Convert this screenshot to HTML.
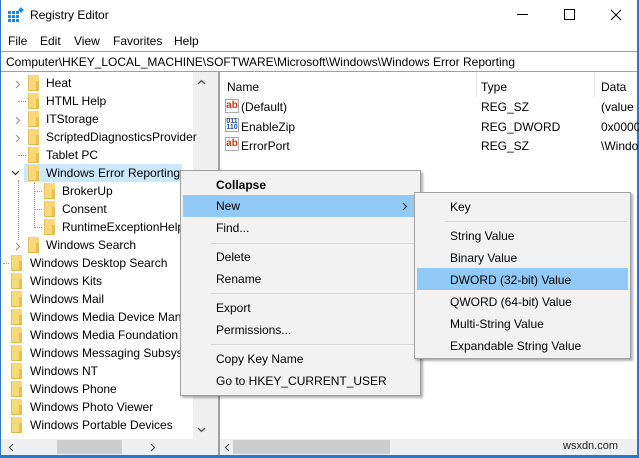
<!DOCTYPE html>
<html><head><style>
*{margin:0;padding:0;box-sizing:border-box}
body{width:639px;height:458px;overflow:hidden;background:#fff;font-family:"Liberation Sans",sans-serif;font-size:12px;color:#000;position:relative}
.a{position:absolute;white-space:nowrap}
.f{position:absolute;width:11px;height:16px;background:#f8d878;border-left:1px solid #e8c25a;border-bottom:1px solid #e0b84a}
.f:after{content:"";position:absolute;right:0;bottom:0;width:3px;height:9px;background:#e9bf4d}
.t{position:absolute;font-size:12px}
.mi{position:absolute;left:35px;font-size:12px}
.sep{position:absolute;left:30px;right:3px;height:1px;background:#d7d7d7}
.dv{position:absolute;width:1px;border-left:1px dotted #999}
.dh{position:absolute;height:1px;border-top:1px dotted #999}
.ch{position:absolute}
</style></head><body>
<div class="a" style="left:0;top:0;width:1px;height:458px;background:#2b78c8"></div>
<div class="a" style="right:0;top:0;width:2px;height:458px;background:#2b78c8"></div>
<div class="a" style="left:0;bottom:0;width:639px;height:3px;background:#2b78c8"></div>
<svg class="a" style="left:8px;top:7px" width="16" height="16"><g fill="#1e88e5"><rect x="0" y="4" width="3" height="3"/><rect x="4" y="4" width="3" height="3"/><rect x="8" y="4" width="3" height="3"/><rect x="0" y="8" width="3" height="3"/><rect x="4" y="8" width="3" height="3"/><rect x="8" y="8" width="3" height="3"/><rect x="0" y="12" width="3" height="3"/><rect x="4" y="12" width="3" height="3"/><rect x="8" y="12" width="3" height="3"/><rect x="11" y="1" width="4" height="4" transform="rotate(45 13 3)"/></g></svg>
<div class="a" style="left:30px;top:8px;font-size:12px">Registry Editor</div>
<div class="a" style="left:517px;top:14px;width:11px;height:1px;background:#000"></div>
<div class="a" style="left:564px;top:9px;width:11px;height:11px;border:1px solid #000"></div>
<svg class="a" style="left:610px;top:9px" width="12" height="12"><path d="M1 1L11 11M11 1L1 11" stroke="#000" stroke-width="1"/></svg>
<div class="a" style="left:8px;top:34px">File</div>
<div class="a" style="left:40px;top:34px">Edit</div>
<div class="a" style="left:74px;top:34px">View</div>
<div class="a" style="left:113px;top:34px">Favorites</div>
<div class="a" style="left:174px;top:34px">Help</div>
<div class="a" style="left:1px;top:51px;width:636px;height:21px;border-top:1px solid #a0a0a0;border-bottom:1px solid #a0a0a0;background:#fff"></div>
<div class="a" style="left:6px;top:55px">Computer\HKEY_LOCAL_MACHINE\SOFTWARE\Microsoft\Windows\Windows Error Reporting</div>
<div class="a" style="left:210px;top:72px;width:9px;height:383px;background:#f0f0f0;border-right:1px solid #a0a0a0"></div>
<div class="a" style="left:193px;top:72px;width:17px;height:367px;background:#f0f0f0"></div>
<svg class="a" style="left:197px;top:79px" width="9" height="6"><path d="M1 5L4.5 1.5L8 5" fill="none" stroke="#555" stroke-width="1.3"/></svg>
<svg class="a" style="left:197px;top:427px" width="9" height="6"><path d="M1 1L4.5 4.5L8 1" fill="none" stroke="#555" stroke-width="1.3"/></svg>
<!-- dotted tree lines -->
<div class="dh" style="left:18px;top:101px;width:8px"></div>
<div class="dh" style="left:18px;top:155px;width:8px"></div>
<div class="dv" style="left:18px;top:180px;height:60px"></div>
<div class="dv" style="left:34px;top:182px;height:46px"></div>
<div class="dh" style="left:34px;top:191px;width:8px"></div>
<div class="dh" style="left:34px;top:209px;width:8px"></div>
<div class="dh" style="left:34px;top:227px;width:8px"></div>
<div class="dh" style="left:3px;top:263px;width:6px"></div>
<svg class="ch" style="left:15px;top:80px" width="6" height="9"><path d="M1 1L4.5 4.5L1 8" fill="none" stroke="#999" stroke-width="1.2"/></svg>
<div class="f" style="left:28px;top:75px"></div><div class="t" style="left:46px;top:76px">Heat</div>
<div class="f" style="left:28px;top:93px"></div><div class="t" style="left:46px;top:94px">HTML Help</div>
<svg class="ch" style="left:15px;top:116px" width="6" height="9"><path d="M1 1L4.5 4.5L1 8" fill="none" stroke="#999" stroke-width="1.2"/></svg>
<div class="f" style="left:28px;top:111px"></div><div class="t" style="left:46px;top:112px">ITStorage</div>
<svg class="ch" style="left:15px;top:134px" width="6" height="9"><path d="M1 1L4.5 4.5L1 8" fill="none" stroke="#999" stroke-width="1.2"/></svg>
<div class="f" style="left:28px;top:129px"></div><div class="t" style="left:46px;top:130px">ScriptedDiagnosticsProvider</div>
<div class="f" style="left:28px;top:147px"></div><div class="t" style="left:46px;top:148px">Tablet PC</div>
<div class="a" style="left:24px;top:164px;width:158px;height:18px;background:#cce8ff"></div>
<svg class="ch" style="left:11px;top:170px" width="9" height="6"><path d="M1 1L4.5 4.5L8 1" fill="none" stroke="#333" stroke-width="1.2"/></svg>
<div class="f" style="left:28px;top:165px"></div><div class="t" style="left:46px;top:166px">Windows Error Reporting</div>
<div class="f" style="left:44px;top:183px"></div><div class="t" style="left:62px;top:184px">BrokerUp</div>
<div class="f" style="left:44px;top:201px"></div><div class="t" style="left:62px;top:202px">Consent</div>
<div class="f" style="left:44px;top:219px"></div><div class="t" style="left:62px;top:220px">RuntimeExceptionHelp</div>
<svg class="ch" style="left:15px;top:242px" width="6" height="9"><path d="M1 1L4.5 4.5L1 8" fill="none" stroke="#999" stroke-width="1.2"/></svg>
<div class="f" style="left:28px;top:237px"></div><div class="t" style="left:46px;top:238px">Windows Search</div>
<div class="f" style="left:11px;top:255px"></div><div class="t" style="left:30px;top:256px">Windows Desktop Search</div>
<div class="f" style="left:11px;top:273px"></div><div class="t" style="left:30px;top:274px">Windows Kits</div>
<div class="f" style="left:11px;top:291px"></div><div class="t" style="left:30px;top:292px">Windows Mail</div>
<div class="f" style="left:11px;top:309px"></div><div class="t" style="left:30px;top:310px">Windows Media Device Man</div>
<div class="f" style="left:11px;top:327px"></div><div class="t" style="left:30px;top:328px">Windows Media Foundation</div>
<div class="f" style="left:11px;top:345px"></div><div class="t" style="left:30px;top:346px">Windows Messaging Subsyst</div>
<div class="f" style="left:11px;top:363px"></div><div class="t" style="left:30px;top:364px">Windows NT</div>
<div class="f" style="left:11px;top:381px"></div><div class="t" style="left:30px;top:382px">Windows Phone</div>
<div class="f" style="left:11px;top:399px"></div><div class="t" style="left:30px;top:400px">Windows Photo Viewer</div>
<div class="f" style="left:11px;top:417px"></div><div class="t" style="left:30px;top:418px">Windows Portable Devices</div>
<div class="a" style="left:1px;top:439px;width:209px;height:16px;background:#f0f0f0"></div>
<div class="a" style="left:57px;top:440px;width:65px;height:14px;background:#cdcdcd"></div>
<svg class="a" style="left:8px;top:443px" width="6" height="9"><path d="M5 1L1.5 4.5L5 8" fill="none" stroke="#555" stroke-width="1.2"/></svg>
<svg class="a" style="left:150px;top:443px" width="6" height="9"><path d="M1 1L4.5 4.5L1 8" fill="none" stroke="#555" stroke-width="1.2"/></svg>
<div class="a" style="left:219px;top:72px;width:1px;height:383px;background:#a0a0a0"></div>
<div class="a" style="left:476px;top:72px;width:1px;height:25px;background:#e5e5e5"></div>
<div class="a" style="left:594px;top:72px;width:1px;height:25px;background:#e5e5e5"></div>
<div class="a" style="left:227px;top:80px">Name</div>
<div class="a" style="left:481px;top:80px">Type</div>
<div class="a" style="left:601px;top:80px">Data</div>
<div class="a" style="left:225px;top:99px;width:14px;height:14px;border:1px solid #aaa;color:#c8361a;font-size:10px;font-weight:bold;line-height:12px;text-align:center">ab</div>
<div class="a" style="left:241px;top:100px">(Default)</div>
<div class="a" style="left:481px;top:100px">REG_SZ</div>
<div class="a" style="left:601px;top:100px">(value</div>
<div class="a" style="left:225px;top:118px;width:14px;height:14px;border:1px solid #aaa;color:#1c4fa8;font-size:7px;font-weight:bold;line-height:6px;text-align:center">011<br>110</div>
<div class="a" style="left:241px;top:120px">EnableZip</div>
<div class="a" style="left:481px;top:120px">REG_DWORD</div>
<div class="a" style="left:601px;top:120px">0x0000</div>
<div class="a" style="left:225px;top:137px;width:14px;height:14px;border:1px solid #aaa;color:#c8361a;font-size:10px;font-weight:bold;line-height:12px;text-align:center">ab</div>
<div class="a" style="left:241px;top:139px">ErrorPort</div>
<div class="a" style="left:481px;top:139px">REG_SZ</div>
<div class="a" style="left:601px;top:139px">\Windo</div>
<div class="a" style="left:220px;top:439px;width:417px;height:16px;background:#f0f0f0"></div>
<div class="a" style="left:233px;top:440px;width:157px;height:14px;background:#cdcdcd"></div>
<svg class="a" style="left:224px;top:443px" width="6" height="9"><path d="M5 1L1.5 4.5L5 8" fill="none" stroke="#555" stroke-width="1.2"/></svg>
<div class="a" style="left:563px;top:440px;font-size:11px;color:#222">wsxdn.com</div>
<div class="a" style="left:180px;top:170px;width:241px;height:226px;background:#f2f2f2;border:1px solid #a0a0a0;box-shadow:2px 2px 2px rgba(0,0,0,.3)">
<div class="a" style="left:2px;top:24px;width:235px;height:22px;background:#91c9f7"></div>
<div class="mi" style="top:7px;font-weight:bold">Collapse</div>
<div class="mi" style="top:28px">New</div>
<svg class="a" style="left:221px;top:31px" width="6" height="9"><path d="M1 1L4.5 4.5L1 8" fill="none" stroke="#333" stroke-width="1.1"/></svg>
<div class="mi" style="top:50px">Find...</div>
<div class="sep" style="top:72px"></div>
<div class="mi" style="top:79px">Delete</div>
<div class="mi" style="top:101px">Rename</div>
<div class="sep" style="top:122px"></div>
<div class="mi" style="top:130px">Export</div>
<div class="mi" style="top:152px">Permissions...</div>
<div class="sep" style="top:173px"></div>
<div class="mi" style="top:181px">Copy Key Name</div>
<div class="mi" style="top:203px">Go to HKEY_CURRENT_USER</div>
</div>
<div class="a" style="left:414px;top:192px;width:217px;height:167px;background:#f2f2f2;border:1px solid #a0a0a0;box-shadow:2px 2px 2px rgba(0,0,0,.3)">
<div class="a" style="left:2px;top:75px;width:211px;height:22px;background:#91c9f7"></div>
<div class="mi" style="top:7px">Key</div>
<div class="sep" style="top:28px"></div>
<div class="mi" style="top:36px">String Value</div>
<div class="mi" style="top:58px">Binary Value</div>
<div class="mi" style="top:80px">DWORD (32-bit) Value</div>
<div class="mi" style="top:102px">QWORD (64-bit) Value</div>
<div class="mi" style="top:124px">Multi-String Value</div>
<div class="mi" style="top:146px">Expandable String Value</div>
</div>
</body></html>
